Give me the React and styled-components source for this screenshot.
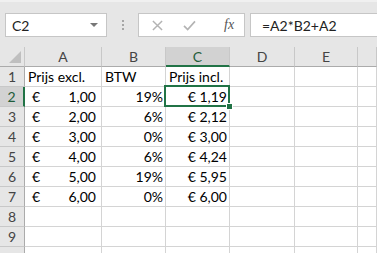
import styled, { createGlobalStyle } from "styled-components";

const GlobalStyle = createGlobalStyle`
  html, body {
    margin: 0;
    padding: 0;
    background: #ffffff;
    overflow: hidden;
  }
  body {
    font-family: "Lato", "Liberation Sans", sans-serif;
  }
`;

const GREEN = "#217346";
const GRID = "#d4d4d4";

const Sheet = styled.div`
  width: 377px;
  height: 253px;
  overflow: hidden;
`;

const FormulaBar = styled.div`
  height: 47px;
  box-sizing: border-box;
  background: #e6e6e6;
  border-top: 2px solid #f0f0f0;
  display: flex;
  align-items: flex-start;
  padding: 11px 0 0 5px;
`;

const NameBox = styled.div`
  width: 102px;
  height: 24px;
  box-sizing: border-box;
  background: #ffffff;
  border: 1px solid #c6c6c6;
  display: flex;
  align-items: center;
  justify-content: space-between;
  padding: 0 8px 0 6px;
  font-size: 14px;
  color: #222;
`;

const Caret = styled.span`
  width: 0;
  height: 0;
  border-left: 4px solid transparent;
  border-right: 4px solid transparent;
  border-top: 4px solid #777;
`;

const Grip = styled.div`
  width: 31px;
  height: 24px;
  display: flex;
  flex-direction: column;
  align-items: center;
  justify-content: center;
  gap: 2px;
  span {
    width: 2px;
    height: 2px;
    background: #a6a6a6;
  }
`;

const ButtonBox = styled.div`
  width: 107px;
  height: 24px;
  box-sizing: border-box;
  background: #ffffff;
  border: 1px solid #c6c6c6;
  display: flex;
  align-items: center;
  padding-left: 13px;
  gap: 20px;
`;

const Fx = styled.span`
  font-family: "Liberation Serif", serif;
  font-style: italic;
  font-size: 14px;
  color: #555;
  margin-left: 8px;
`;

const FormulaInput = styled.div`
  flex: 1;
  height: 24px;
  margin-left: 5px;
  box-sizing: border-box;
  background: #ffffff;
  border: 1px solid #c6c6c6;
  border-right: none;
  display: flex;
  align-items: center;
  padding-left: 11px;
  font-size: 14px;
  color: #222;
`;

const Grid = styled.div`
  display: grid;
  grid-template-columns: 25px 77px 64px 64px 65px 63px 1fr;
  grid-auto-rows: 20px;
`;

const Corner = styled.div`
  box-sizing: border-box;
  background: #e6e6e6;
  border-right: 1px solid #c8c8c8;
  border-bottom: 1px solid #ababab;
  position: relative;
  &::after {
    content: "";
    position: absolute;
    right: 3px;
    bottom: 3px;
    border-left: 12px solid transparent;
    border-bottom: 12px solid #bfbfbf;
  }
`;

const ColHead = styled.div`
  box-sizing: border-box;
  background: ${(p) => (p.$active ? "#d2d2d2" : "#e6e6e6")};
  border-right: 1px solid #c8c8c8;
  border-bottom: ${(p) => (p.$active ? `2px solid ${GREEN}` : "1px solid #ababab")};
  display: flex;
  align-items: center;
  justify-content: center;
  font-size: 14px;
  color: ${(p) => (p.$active ? "#1f5c3a" : "#444")};
`;

const RowHead = styled.div`
  box-sizing: border-box;
  background: ${(p) => (p.$active ? "#d2d2d2" : "#e6e6e6")};
  border-right: ${(p) => (p.$active ? `2px solid ${GREEN}` : "1px solid #ababab")};
  border-bottom: 1px solid #c8c8c8;
  display: flex;
  align-items: center;
  justify-content: center;
  font-size: 14px;
  color: ${(p) => (p.$active ? "#1f5c3a" : "#444")};
`;

const Cell = styled.div`
  box-sizing: border-box;
  border-right: 1px solid ${GRID};
  border-bottom: 1px solid ${GRID};
  display: flex;
  align-items: center;
  justify-content: ${(p) => (p.$align === "right" ? "flex-end" : p.$align === "split" ? "space-between" : "flex-start")};
  padding: ${(p) => (p.$align === "split" ? "0 5px 0 7px" : p.$align === "right" ? "0 2px 0 0" : "0 0 0 3px")};
  font-size: 14px;
  color: #000;
  white-space: nowrap;
  position: relative;
  overflow: visible;
  ${(p) =>
    p.$selected &&
    `
    &::after {
      content: "";
      position: absolute;
      left: -2px;
      top: -2px;
      right: -1px;
      bottom: -1px;
      border: 2px solid ${GREEN};
      pointer-events: none;
    }
    &::before {
      content: "";
      position: absolute;
      right: -4px;
      bottom: -4px;
      width: 5px;
      height: 5px;
      background: ${GREEN};
      border: 1px solid #fff;
      z-index: 2;
    }
  `}
`;

const cols = ["A", "B", "C", "D", "E", ""];

const rows = [
  { n: 1, a: "Prijs excl.", b: "BTW", c: "Prijs incl.", head: true },
  { n: 2, a: "1,00", b: "19%", c: "€ 1,19" },
  { n: 3, a: "2,00", b: "6%", c: "€ 2,12" },
  { n: 4, a: "3,00", b: "0%", c: "€ 3,00" },
  { n: 5, a: "4,00", b: "6%", c: "€ 4,24" },
  { n: 6, a: "5,00", b: "19%", c: "€ 5,95" },
  { n: 7, a: "6,00", b: "0%", c: "€ 6,00" },
  { n: 8 },
  { n: 9 },
  { n: 10, hidden: true },
];

const Cross = () => (
  <svg width="11" height="11" viewBox="0 0 12 12">
    <path d="M1 1 L11 11 M11 1 L1 11" stroke="#b3b3b3" strokeWidth="1.6" fill="none" />
  </svg>
);

const Check = () => (
  <svg width="13" height="11" viewBox="0 0 14 12">
    <path d="M1 6.5 L5 10.5 L13 1.5" stroke="#b3b3b3" strokeWidth="1.8" fill="none" />
  </svg>
);

const App = () => {
  return (
    <Sheet>
      <GlobalStyle />
      <FormulaBar>
        <NameBox>
          <span>C2</span>
          <Caret />
        </NameBox>
        <Grip>
          <span />
          <span />
          <span />
        </Grip>
        <ButtonBox>
          <Cross />
          <Check />
          <Fx>fx</Fx>
        </ButtonBox>
        <FormulaInput>=A2*B2+A2</FormulaInput>
      </FormulaBar>
      <Grid>
        <Corner />
        {cols.map((c, i) => (
          <ColHead key={i} $active={c === "C"}>
            {c}
          </ColHead>
        ))}
        {rows.map((r) => (
          <>
            <RowHead key={`h${r.n}`} $active={r.n === 2}>
              {r.hidden ? "" : r.n}
            </RowHead>
            {r.head ? (
              <Cell>{r.a}</Cell>
            ) : r.a ? (
              <Cell $align="split">
                <span>€</span>
                <span>{r.a}</span>
              </Cell>
            ) : (
              <Cell />
            )}
            <Cell $align={r.head ? "left" : "right"}>{r.b}</Cell>
            <Cell $align={r.head ? "left" : "right"} $selected={r.n === 2}>
              {r.c}
            </Cell>
            <Cell />
            <Cell />
            <Cell />
          </>
        ))}
      </Grid>
    </Sheet>
  );
};

export default App;
